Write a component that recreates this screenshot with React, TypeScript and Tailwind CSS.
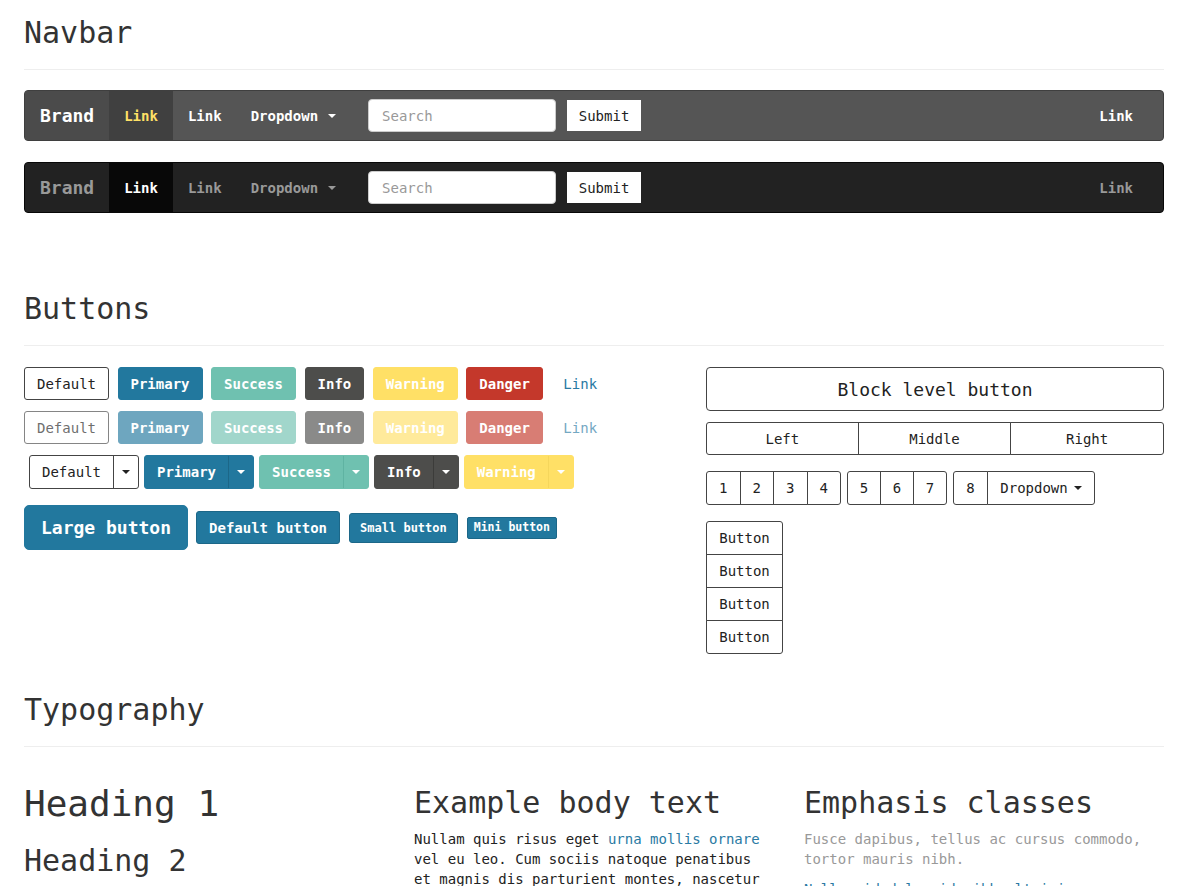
import React from 'react';

const font = { fontFamily: '"DejaVu Sans Mono", "Liberation Mono", monospace' };

const Caret: React.FC<{ className?: string }> = ({ className = '' }) => (
  <span
    className={`inline-block w-0 h-0 border-x-4 border-x-transparent border-t-4 border-t-current align-middle ${className}`}
  />
);

const btnColors: Record<string, string> = {
  default: 'bg-white border-[#444] text-[#222]',
  primary: 'bg-[#22789e] border-[#22789e] text-white font-bold',
  success: 'bg-[#6fc1b0] border-[#6fc1b0] text-white font-bold',
  info: 'bg-[#4d4d4b] border-[#4d4d4b] text-white font-bold',
  warning: 'bg-[#ffe066] border-[#ffe066] text-white font-bold',
  danger: 'bg-[#c4382b] border-[#c4382b] text-white font-bold',
};

const splitDivider: Record<string, string> = {
  default: 'border-l-[#444]',
  primary: 'border-l-[#1c6788]',
  success: 'border-l-[#5fb3a2]',
  info: 'border-l-[#3c3c3a]',
  warning: 'border-l-[#f5d65c]',
};

const PageHeader: React.FC<{ title: string; className?: string }> = ({ title, className = '' }) => (
  <div className={`border-b border-[#eee] pb-5 ${className}`}>
    <h1 className="text-[30px] leading-[33px] text-[#333]">{title}</h1>
  </div>
);

const Navbar: React.FC<{ inverse?: boolean }> = ({ inverse }) => {
  const bar = inverse ? 'bg-[#222] border-[#080808]' : 'bg-[#555] border-[#3f3f3f]';
  const brand = inverse ? 'text-[#999] bg-[#222]' : 'text-white bg-[#4b4b4b]';
  const active = inverse ? 'bg-[#080808] text-white' : 'bg-[#404040] text-[#ffe066]';
  const link = inverse ? 'text-[#999]' : 'text-white';
  return (
    <div className={`h-[51px] border rounded flex items-stretch ${bar}`}>
      <div className={`px-[15px] flex items-center text-[18px] font-bold rounded-l ${brand}`}>Brand</div>
      <div className={`px-[15px] flex items-center text-sm font-bold ${active}`}>Link</div>
      <div className={`px-[15px] flex items-center text-sm font-bold ${link}`}>Link</div>
      <div className={`pl-[14px] pr-[17px] flex items-center gap-[10px] text-sm font-bold ${link}`}>
        Dropdown <Caret />
      </div>
      <div className="flex items-center pl-[15px] gap-[11px]">
        <div className="w-[188px] h-[33px] bg-white border border-[#ccc] rounded-sm flex items-center px-[13px] text-sm text-[#999]">
          Search
        </div>
        <div className="w-[74px] h-[31px] bg-white flex items-center justify-center text-sm text-[#222]">Submit</div>
      </div>
      <div className="flex-1" />
      <div className={`px-[15px] mr-[15px] flex items-center text-sm font-bold ${link}`}>Link</div>
    </div>
  );
};

const Btn: React.FC<{ kind: string; children: React.ReactNode; disabled?: boolean }> = ({ kind, children, disabled }) => (
  <div
    className={`h-[33px] px-3 border rounded-[3px] flex items-center text-sm ${btnColors[kind]} ${disabled ? 'opacity-65' : ''}`}
  >
    {children}
  </div>
);

const Split: React.FC<{ kind: string; label: string }> = ({ kind, label }) => (
  <div className={`h-[34px] border rounded-[3px] flex items-stretch text-sm ${btnColors[kind]}`}>
    <div className="px-3 flex items-center">{label}</div>
    <div className={`w-[25px] border-l flex items-center justify-center ${splitDivider[kind]}`}>
      <Caret />
    </div>
  </div>
);

const outline = 'border border-[#444] bg-white text-[#222] flex items-center justify-center text-sm';

const App: React.FC = () => {
  const kinds = ['default', 'primary', 'success', 'info', 'warning', 'danger'];
  const labels = ['Default', 'Primary', 'Success', 'Info', 'Warning', 'Danger'];
  return (
    <div className="min-h-screen bg-white overflow-hidden" style={font}>
      <div className="w-[1140px] ml-6 pt-4 text-[#333]">
        {/* Navbar */}
        <PageHeader title="Navbar" />
        <div className="mt-5">
          <Navbar />
        </div>
        <div className="mt-[21px]">
          <Navbar inverse />
        </div>

        {/* Buttons */}
        <PageHeader title="Buttons" className="mt-[79px]" />
        <div className="grid grid-cols-[682px_458px] mt-[21px]">
          <div>
            <div className="flex gap-[8.5px] mb-[11px]">
              {kinds.map((k, i) => (
                <Btn key={k} kind={k}>
                  {labels[i]}
                </Btn>
              ))}
              <div className="h-[33px] px-3 flex items-center text-sm text-[#2a7aa3]">Link</div>
            </div>
            <div className="flex gap-[8.5px] mb-[11px]">
              {kinds.map((k, i) => (
                <Btn key={k} kind={k} disabled>
                  {labels[i]}
                </Btn>
              ))}
              <div className="h-[33px] px-3 flex items-center text-sm text-[#2a7aa3] opacity-65">Link</div>
            </div>
            <div className="flex gap-[5px] ml-[5px] mb-4">
              {kinds.slice(0, 5).map((k, i) => (
                <Split key={k} kind={k} label={labels[i]} />
              ))}
            </div>
            <div className="flex items-center gap-2">
              <div className="h-[45px] px-4 rounded-[5px] bg-[#22789e] border border-[#22789e] text-white font-bold text-[18px] flex items-center">
                Large button
              </div>
              <div className="h-[33px] px-3 rounded-[3px] bg-[#22789e] border border-[#1c6788] text-white font-bold text-sm flex items-center">
                Default button
              </div>
              <div className="h-[30px] px-[10px] rounded-[3px] bg-[#22789e] border border-[#1c6788] text-white font-bold text-xs flex items-center ml-px">
                Small button
              </div>
              <div className="h-[22px] px-[6px] rounded-[2px] bg-[#22789e] border border-[#1c6788] text-white font-bold text-[11.5px] flex items-center ml-px">
                Mini button
              </div>
            </div>
          </div>

          <div>
            <div className="h-[44px] border border-[#444] rounded flex items-center justify-center text-[18px] text-[#222]">
              Block level button
            </div>
            <div className="grid grid-cols-3 mt-[11px] h-[33px]">
              <div className={`${outline} rounded-l-[3px]`}>Left</div>
              <div className={`${outline} -ml-px`}>Middle</div>
              <div className={`${outline} -ml-px rounded-r-[3px]`}>Right</div>
            </div>
            <div className="flex gap-[6px] mt-4 h-[34px]">
              <div className="flex">
                {['1', '2', '3', '4'].map((n, i) => (
                  <div key={n} className={`${outline} w-[34.5px] ${i ? '-ml-px' : 'rounded-l-[3px]'} ${i === 3 ? 'rounded-r-[3px]' : ''}`}>
                    {n}
                  </div>
                ))}
              </div>
              <div className="flex">
                {['5', '6', '7'].map((n, i) => (
                  <div key={n} className={`${outline} w-[34px] ${i ? '-ml-px' : 'rounded-l-[3px]'} ${i === 2 ? 'rounded-r-[3px]' : ''}`}>
                    {n}
                  </div>
                ))}
              </div>
              <div className="flex">
                <div className={`${outline} w-[35px] rounded-l-[3px]`}>8</div>
                <div className={`${outline} -ml-px w-[108px] gap-[6px] rounded-r-[3px]`}>
                  Dropdown <Caret />
                </div>
              </div>
            </div>
            <div className="flex flex-col w-[77px] mt-4">
              {[0, 1, 2, 3].map((i) => (
                <div
                  key={i}
                  className={`${outline} h-[34px] ${i ? '-mt-px' : 'rounded-t-[3px]'} ${i === 3 ? 'rounded-b-[3px]' : ''}`}
                >
                  Button
                </div>
              ))}
            </div>
          </div>
        </div>

        {/* Typography */}
        <PageHeader title="Typography" className="mt-[39px]" />
        <div className="grid grid-cols-3 gap-[30px]">
          <div className="pt-[37px]">
            <h1 className="text-[36px] leading-[40px] text-[#333]">Heading 1</h1>
            <h2 className="text-[30px] leading-[33px] text-[#333] mt-5">Heading 2</h2>
          </div>
          <div className="pt-[39px]">
            <h3 className="text-[30px] leading-[33px] text-[#333]">Example body text</h3>
            <p className="mt-[10px] text-sm leading-5 text-[#222]">
              Nullam quis risus eget <span className="text-[#2a7aa3]">urna mollis ornare</span> vel eu leo. Cum sociis
              natoque penatibus et magnis dis parturient montes, nascetur
            </p>
          </div>
          <div className="pt-[39px]">
            <h3 className="text-[30px] leading-[33px] text-[#333]">Emphasis classes</h3>
            <p className="mt-[10px] text-sm leading-5 text-[#999]">Fusce dapibus, tellus ac cursus commodo, tortor mauris nibh.</p>
            <p className="mt-[10px] text-sm leading-5 text-[#2a7aa3]">Nullam id dolor id nibh ultricies vehicula.</p>
          </div>
        </div>
      </div>
    </div>
  );
};

export default App;
